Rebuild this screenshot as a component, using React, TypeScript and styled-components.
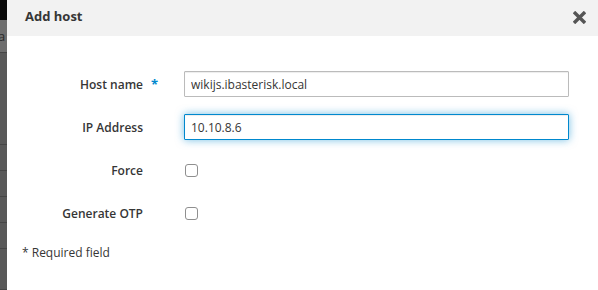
import React from "react";
import styled, { createGlobalStyle } from "styled-components";

const GlobalStyle = createGlobalStyle`
  html, body {
    margin: 0;
    padding: 0;
    background: #fff;
    font-family: "Open Sans", "Liberation Sans", sans-serif;
    color: #363636;
  }
`;

const Screen = styled.div`
  display: flex;
  width: 598px;
  height: 290px;
  overflow: hidden;
`;

const PageBehind = styled.div`
  width: 7px;
  flex-shrink: 0;
  display: flex;
  flex-direction: column;
  background: #575757;
  overflow: hidden;
`;

const PageNav = styled.div`
  height: 35px;
  background: #0a0a0a;
`;

const PageCell = styled.div<{ $h: number; $light?: boolean }>`
  height: ${(p) => p.$h}px;
  flex-shrink: 0;
  border-bottom: 1px solid #464646;
  background: ${(p) => (p.$light ? "#6e6e6e" : "#595959")};
  color: #2b2b2b;
  font-size: 13px;
  line-height: ${(p) => p.$h}px;
  white-space: nowrap;
  text-indent: -2px;
`;

const Modal = styled.div`
  flex: 1;
  display: flex;
  flex-direction: column;
  background: #fff;
`;

const Header = styled.div`
  height: 36px;
  flex-shrink: 0;
  display: flex;
  align-items: center;
  justify-content: space-between;
  padding: 0 12px 0 18px;
  background: #f2f2f2;
`;

const Title = styled.h4`
  margin: 0;
  font-size: 13px;
  font-weight: 700;
  color: #363636;
  margin-top: -5px;
`;

const CloseButton = styled.button`
  border: 0;
  background: none;
  padding: 0;
  width: 13px;
  height: 13px;
  display: flex;
  margin-top: -1px;
  cursor: pointer;
`;

const Body = styled.div`
  padding: 35px 15px 0 15px;
`;

const Form = styled.div`
  display: grid;
  grid-template-columns: 121px 385px;
  column-gap: 41px;
  row-gap: 17px;
`;

const Label = styled.label`
  position: relative;
  display: flex;
  align-items: center;
  justify-content: flex-end;
  height: 26px;
  font-size: 12px;
  font-weight: 600;
  color: #363636;
`;

const Required = styled.span`
  position: absolute;
  left: 100%;
  margin-left: 8px;
  color: #0088ce;
  font-weight: 700;
  font-size: 13px;
`;

const Field = styled.div`
  display: flex;
  align-items: center;
  height: 26px;
`;

const TextInput = styled.input<{ $focused?: boolean }>`
  box-sizing: border-box;
  width: 100%;
  height: 26px;
  padding: 2px 6px;
  font-family: inherit;
  font-size: 12px;
  color: #363636;
  background: #fff;
  border: 1px solid ${(p) => (p.$focused ? "#0088ce" : "#bbbbbb")};
  border-radius: 1px;
  outline: none;
  box-shadow: ${(p) =>
    p.$focused
      ? "inset 0 1px 1px rgba(3,3,3,.075), 0 0 8px rgba(0,136,206,.55)"
      : "inset 0 1px 1px rgba(3,3,3,.075)"};
`;

const Checkbox = styled.input.attrs({ type: "checkbox" })`
  appearance: none;
  margin: 0 0 0 1px;
  width: 13px;
  height: 13px;
  border: 1px solid #8f8f8f;
  border-radius: 3px;
  background: #fff;
`;

const Note = styled.p`
  margin: 18px 0 0;
  font-size: 12px;
  color: #363636;
`;

const fields = [
  { label: "Host name", required: true, value: "wikijs.ibasterisk.local" },
  { label: "IP Address", value: "10.10.8.6", focused: true },
];

const checks = ["Force", "Generate OTP"];

export default function App() {
  return (
    <>
      <GlobalStyle />
      <Screen>
        <PageBehind>
          <PageNav />
          <PageCell $h={32} $light>
            a
          </PageCell>
          <PageCell $h={91} />
          <PageCell $h={25} />
          <PageCell $h={25} />
          <PageCell $h={25} />
          <PageCell $h={25} />
          <PageCell $h={40} />
        </PageBehind>
        <Modal>
          <Header>
            <Title>Add host</Title>
            <CloseButton aria-label="Close">
              <svg width="13" height="13" viewBox="0 0 13 13">
                <path
                  d="M2.2 2.2 L10.8 10.8 M10.8 2.2 L2.2 10.8"
                  stroke="#555"
                  strokeWidth="3.4"
                  strokeLinecap="square"
                />
              </svg>
            </CloseButton>
          </Header>
          <Body>
            <Form>
              {fields.map((f) => (
                <React.Fragment key={f.label}>
                  <Label>
                    {f.label}
                    {f.required && <Required>*</Required>}
                  </Label>
                  <Field>
                    <TextInput defaultValue={f.value} $focused={f.focused} />
                  </Field>
                </React.Fragment>
              ))}
              {checks.map((c) => (
                <React.Fragment key={c}>
                  <Label>{c}</Label>
                  <Field>
                    <Checkbox />
                  </Field>
                </React.Fragment>
              ))}
            </Form>
            <Note>* Required field</Note>
          </Body>
        </Modal>
      </Screen>
    </>
  );
}
